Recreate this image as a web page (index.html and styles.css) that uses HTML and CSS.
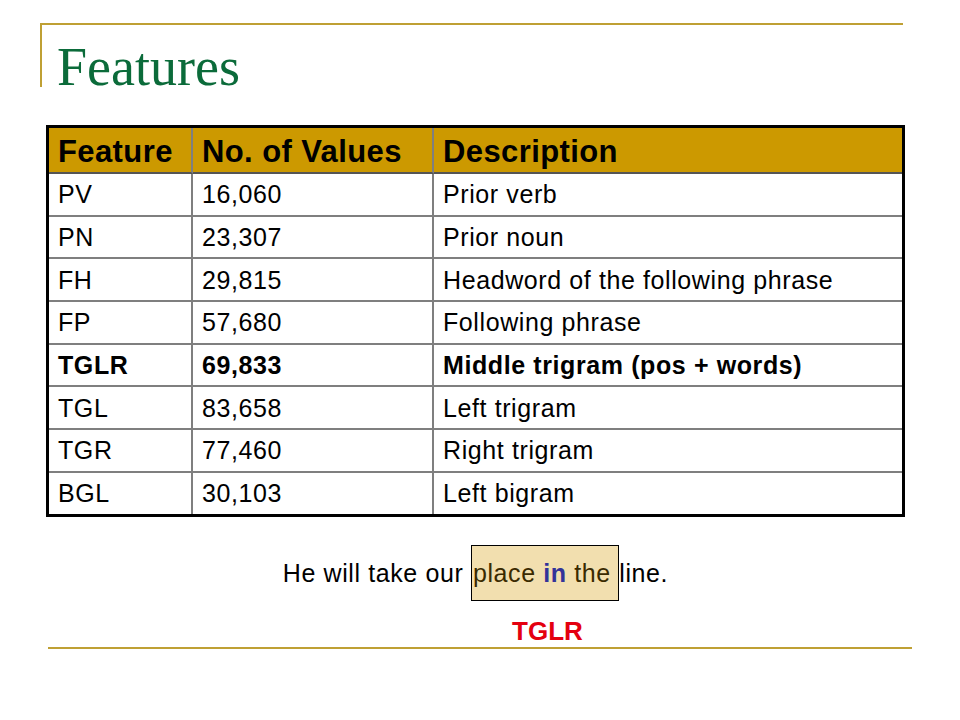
FILE: index.html
```html
<!DOCTYPE html>
<html>
<head>
<meta charset="utf-8">
<link rel="stylesheet" href="styles.css">
</head>
<body>
<div class="slide">
  <div class="title-frame">
    <h1 class="title">Features</h1>
  </div>
  <table class="features">
    <colgroup>
      <col class="c1"><col class="c2"><col class="c3">
    </colgroup>
    <thead>
      <tr class="head"><th>Feature</th><th>No. of Values</th><th>Description</th></tr>
    </thead>
    <tbody>
      <tr><td>PV</td><td>16,060</td><td>Prior verb</td></tr>
      <tr><td>PN</td><td>23,307</td><td>Prior noun</td></tr>
      <tr><td>FH</td><td>29,815</td><td>Headword of the following phrase</td></tr>
      <tr><td>FP</td><td>57,680</td><td>Following phrase</td></tr>
      <tr class="bold"><td>TGLR</td><td>69,833</td><td>Middle trigram (pos + words)</td></tr>
      <tr><td>TGL</td><td>83,658</td><td>Left trigram</td></tr>
      <tr><td>TGR</td><td>77,460</td><td>Right trigram</td></tr>
      <tr class="last"><td>BGL</td><td>30,103</td><td>Left bigram</td></tr>
    </tbody>
  </table>
  <p class="sentence">He will take our <span class="window">place <b class="focus">in</b> the </span>line.</p>
  <p class="label">TGLR</p>
  <div class="rule"></div>
</div>
</body>
</html>
```
FILE: styles.css
```css
html, body {
  margin: 0;
  padding: 0;
  background: #ffffff;
}
.slide {
  width: 960px;
  height: 720px;
  overflow: hidden;
  background: #ffffff;
  padding-top: 23px;
  box-sizing: border-box;
}
.title-frame {
  margin-left: 40px;
  width: 846px;
  border-top: 2px solid #BFA034;
  border-left: 2px solid #BFA034;
  padding-left: 15px;
  padding-top: 15px;
  box-sizing: content-box;
  height: 47px;
}
.title {
  margin: 0;
  font-family: "Liberation Serif", "Times New Roman", serif;
  font-weight: normal;
  font-size: 54px;
  line-height: 54px;
  color: #0B6B3A;
  height: 47px;
}
.features {
  margin-top: 38px;
  margin-left: 46px;
  width: 859px;
  border-collapse: separate;
  border-spacing: 0;
  border: 3px solid #000000;
  font-family: "Liberation Sans", Arial, sans-serif;
  color: #000000;
}
.c1 { width: 144px; }
.c2 { width: 241px; }
.features th,
.features td {
  text-align: left;
  padding: 0 0 0 9px;
  border-right: 2px solid #7F7F7F;
  border-bottom: 2px solid #7F7F7F;
  vertical-align: middle;
  white-space: nowrap;
}
.features th:last-child,
.features td:last-child {
  border-right: none;
}
.features tr.last td {
  border-bottom: none;
}
.features th {
  background: #CC9900;
  font-size: 31px;
  font-weight: bold;
  letter-spacing: 0.4px;
  height: 41px;
  padding-top: 3px;
  border-bottom-color: #555555;
}
.features td {
  font-size: 25px;
  letter-spacing: 0.6px;
  height: 39.7px;
  padding-top: 1px;
  background: #ffffff;
}
.features tr.last td {
  height: 40px;
}
.features tr.bold td {
  font-weight: bold;
}
.sentence {
  margin: 41px 0 0 0;
  padding-right: 9px;
  text-align: center;
  font-family: "Liberation Sans", Arial, sans-serif;
  font-size: 25px;
  letter-spacing: 0.6px;
  line-height: 30px;
  color: #000000;
}
.window {
  background: #F2DFAF;
  border: 1px solid #000000;
  padding: 13px 0 13px 1px;
  color: #3A2A00;
}
.focus {
  color: #333399;
}
.label {
  margin: 28px 0 0 0;
  padding-left: 135px;
  text-align: center;
  font-family: "Liberation Sans", Arial, sans-serif;
  font-size: 26px;
  font-weight: bold;
  line-height: 30px;
  color: #E4000F;
}
.rule {
  margin-top: 1px;
  margin-left: 48px;
  width: 864px;
  height: 2px;
  background: #BFA034;
}
```
